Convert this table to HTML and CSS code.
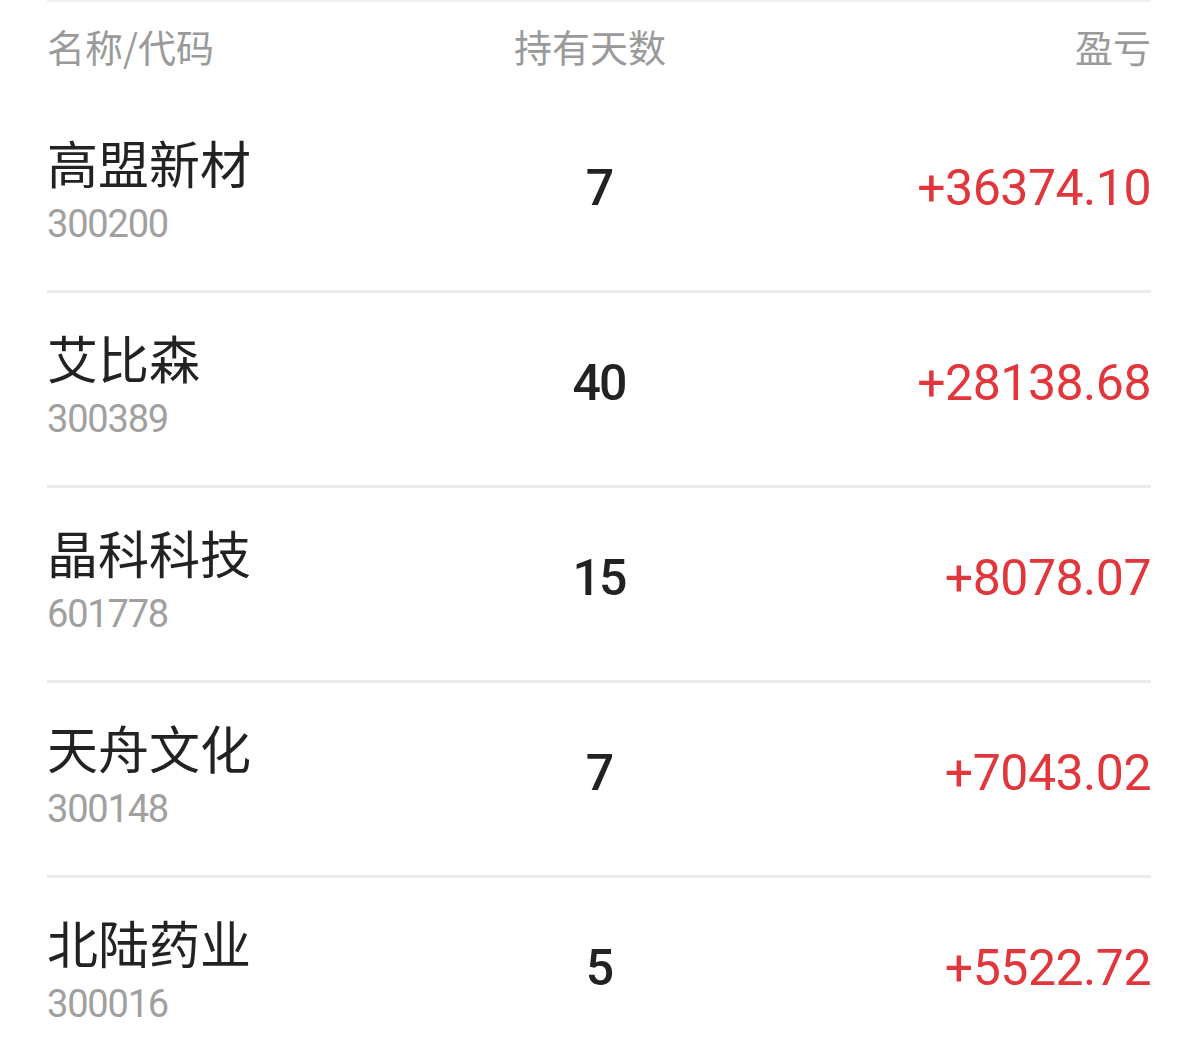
FILE: index.html
```html
<!DOCTYPE html>
<html lang="zh-CN">
<head>
  <meta charset="UTF-8" />
  <meta name="viewport" content="width=device-width, initial-scale=1.0" />
  <title>持仓盈亏</title>
  <link rel="stylesheet" href="styles.css">
</head>
<body>

<!-- Holdings table -->
<div class="holdings">
  <div class="head">
    <span class="col-name">名称/代码</span>
    <span class="col-days">持有天数</span>
    <span class="col-pnl">盈亏</span>
  </div>

  <div class="row">
    <div class="col-name">
      <div class="name">高盟新材</div>
      <div class="code">300200</div>
    </div>
    <div class="col-days days">7</div>
    <div class="col-pnl pnl">+36374.10</div>
  </div>

  <div class="row">
    <div class="col-name">
      <div class="name">艾比森</div>
      <div class="code">300389</div>
    </div>
    <div class="col-days days">40</div>
    <div class="col-pnl pnl">+28138.68</div>
  </div>

  <div class="row">
    <div class="col-name">
      <div class="name">晶科科技</div>
      <div class="code">601778</div>
    </div>
    <div class="col-days days">15</div>
    <div class="col-pnl pnl">+8078.07</div>
  </div>

  <div class="row">
    <div class="col-name">
      <div class="name">天舟文化</div>
      <div class="code">300148</div>
    </div>
    <div class="col-days days">7</div>
    <div class="col-pnl pnl">+7043.02</div>
  </div>

  <div class="row">
    <div class="col-name">
      <div class="name">北陆药业</div>
      <div class="code">300016</div>
    </div>
    <div class="col-days days">5</div>
    <div class="col-pnl pnl">+5522.72</div>
  </div>
</div>

</body>
</html>
```

FILE: styles.css
```css
* { margin: 0; padding: 0; box-sizing: border-box; }
html, body {
  background: #fff;
  font-family: "Noto Sans CJK SC", "Noto Sans", sans-serif;
  color: #222;
  overflow: hidden;
}

.holdings {
  margin: 0 48px 0 47px;
  border-top: 2px solid #efefef;
}

.head,
.row {
  display: grid;
  grid-template-columns: 1fr 1fr 1fr;
  align-items: center;
}

.head {
  height: 96px;
  font-size: 38px;
  line-height: 1;
  color: #9a9a9a;
  padding-bottom: 8px;
}

.col-days { text-align: center; }
.col-pnl { text-align: right; }

.head .col-days {
  padding-right: 18px;
}

.row {
  height: 195px;
  border-bottom: 3px solid #ececec;
}

.row .col-name {
  padding-bottom: 8px;
}

.name {
  font-size: 51px;
  line-height: 1;
  color: #222;
}

.code {
  margin-top: 17px;
  font-family: Roboto, "Liberation Sans", sans-serif;
  font-size: 38px;
  line-height: 1;
  letter-spacing: -1.2px;
  color: #a0a0a0;
}

.days {
  font-family: Roboto, "Liberation Sans", sans-serif;
  font-size: 50px;
  font-weight: 500;
  letter-spacing: -2px;
  line-height: 1;
  color: #222;
  padding-bottom: 12px;
}

.pnl {
  font-family: Roboto, "Liberation Sans", sans-serif;
  font-size: 50px;
  line-height: 1;
  letter-spacing: -0.5px;
  color: #e2363d;
  padding-bottom: 12px;
}
```
